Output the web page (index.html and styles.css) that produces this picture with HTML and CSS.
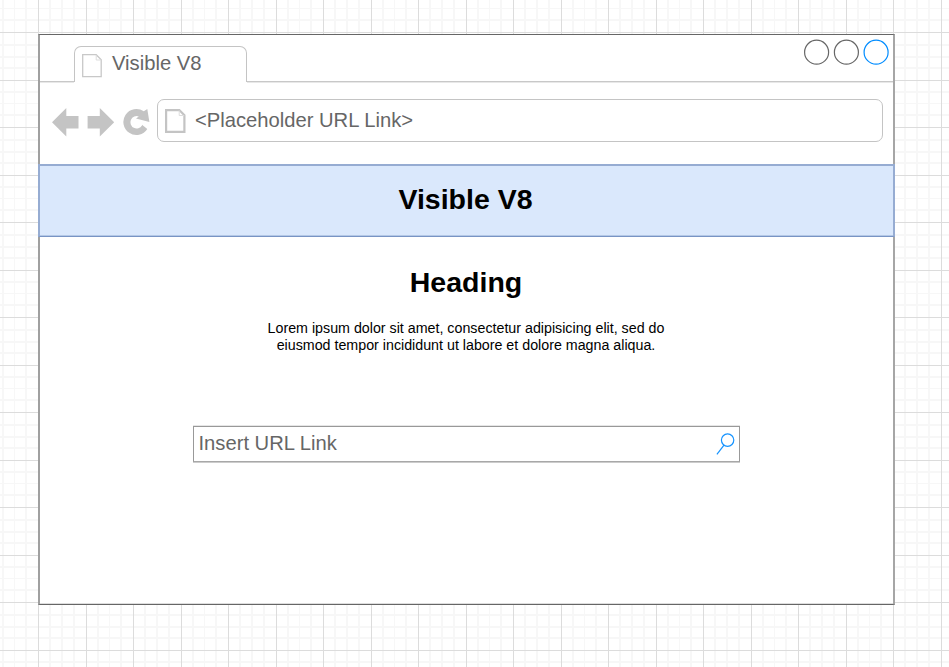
FILE: index.html
```html
<!DOCTYPE html>
<html lang="en">
<head>
<meta charset="utf-8">
<title>Visible V8</title>
<link rel="stylesheet" href="styles.css">
</head>
<body>
<svg class="grid" aria-hidden="true">
  <defs>
    <pattern id="cells" x="38" y="32" width="95" height="95" patternUnits="userSpaceOnUse">
      <path fill="#f7f7f7" d="M11 0h2v95h-2zM23 0h2v95h-2zM35 0h2v95h-2zM59 0h2v95h-2zM71 0h1v95h-1zM82 0h2v95h-2zM0 12h95v2H0zM0 24h95v2H0zM0 35h95v2H0zM0 59h95v2H0zM0 71h95v1H0zM0 82h95v2H0z"/>
      <path fill="#dcdcdc" d="M0 0h1v95H0zM48 0h1v95h-1zM0 0h95v1H0zM0 48h95v1H0z"/>
    </pattern>
  </defs>
  <rect width="100%" height="100%" fill="url(#cells)"/>
</svg>
<main class="window">
  <header class="tabs">
    <div class="lead"></div>
    <div class="tab">
      <svg class="page-icon" width="20" height="24" viewBox="0 0 20 24"><path class="outline" d="M.7.7h13.5l5 5v17H.7z"/><path class="fold" d="M14.2 1v5h5"/></svg>
      <span>Visible V8</span>
    </div>
    <div class="rest">
      <svg width="86" height="28" viewBox="0 0 86 28" fill="none" stroke="#666" stroke-width="1.2"><circle cx="13.6" cy="14.2" r="12"/><circle cx="43.4" cy="14.2" r="12"/><circle cx="73.1" cy="14.2" r="12" stroke="#008cff"/></svg>
    </div>
  </header>
  <nav class="toolbar">
    <svg class="nav-icons" width="98" height="30" viewBox="0 0 98 30" fill="#c4c4c4"><path d="M0 15.3 14.3 1v8H26.5v12.6H14.3v8zM35.6 9H47.8V1l14.4 14.3-14.4 14.3v-8H35.6z"/><path d="M90 17.7 95.3 22A13 13 0 1 1 91.8 4.3L95.3 2 97.4 15 84 11.5 86.8 9.5A6.2 6.2 0 1 0 90 18.5z"/></svg>
    <div class="address">
      <svg class="page-icon" width="21" height="24" viewBox="0 0 21 24"><path class="outline thick" d="M1.1 1.1h13.2l5.1 5.2v16.5H1.1z"/><path class="fold" d="M14.2 1.5v5h5"/></svg>
      <span>&lt;Placeholder URL Link&gt;</span>
    </div>
  </nav>
  <section class="banner"><h1>Visible V8</h1></section>
  <section class="content">
    <h2>Heading</h2>
    <p>Lorem ipsum dolor sit amet, consectetur adipisicing elit, sed do<br>eiusmod tempor incididunt ut labore et dolore magna aliqua.</p>
    <div class="search">
      <span>Insert URL Link</span>
      <svg width="20" height="24" viewBox="0 0 20 24" fill="none" stroke="#1593ff" stroke-width="1.2"><circle cx="11.6" cy="8.1" r="6.2"/><path d="M8 13.2.9 22.3"/></svg>
    </div>
  </section>
</main>
</body>
</html>
```

FILE: styles.css
```css
* { box-sizing: border-box; }
body {
  margin: 0;
  height: 667px;
  overflow: hidden;
  padding: 34px 0 0 38px;
  background: #fff;
  font-family: "Liberation Sans", Arial, sans-serif;
}
svg { display: block; flex: none; }
.grid { position: absolute; inset: 0; width: 100%; height: 100%; z-index: -1; }
.window {
  width: 857px;
  height: 571px;
  background: #fff;
  border: 1px solid #666;
  border-left: 2px solid #a0a0a0;
  border-right: 2px solid #a6a6a6;
  box-shadow: inset 0 -1px #ddd;
  display: flex;
  flex-direction: column;
}
.tabs { height: 47px; display: flex; flex: none; }
.lead { width: 34px; border-bottom: 1px solid #c8c8c8; box-shadow: 0 1px #e8e8e8; }
.tab {
  width: 173px;
  height: 36px;
  margin-top: 11px;
  border: 1px solid #c4c4c4;
  border-bottom: 0;
  border-radius: 7px 7px 0 0;
  display: flex;
  padding-left: 7px;
  color: #666;
  font-size: 20.2px;
  line-height: 23px;
}
.tab .page-icon { margin-top: 7px; }
.tab span { margin: 5px 0 0 10px; }
.outline { fill: none; stroke: #c8c8c8; stroke-width: 1.3; }
.thick { stroke: #c4c4c4; stroke-width: 2.2; }
.fold { fill: none; stroke: #ddd; stroke-width: 1; }
.rest {
  flex: 1;
  border-bottom: 1px solid #c8c8c8;
  box-shadow: 0 1px #e8e8e8;
  display: flex;
  justify-content: flex-end;
  padding: 3px 4px 0 0;
}
.toolbar { height: 82px; flex: none; display: flex; padding: 17px 0 0 12px; }
.nav-icons { margin-top: 8px; }
.address {
  width: 726px;
  height: 43px;
  margin-left: 7px;
  border: 1px solid #c4c4c4;
  border-radius: 7px;
  display: flex;
  padding-left: 7px;
  color: #666;
  font-size: 20.2px;
  line-height: 23px;
}
.address .page-icon { margin-top: 9px; }
.address span { margin: 9px 0 0 9px; }
.banner {
  height: 73px;
  flex: none;
  margin: 0 -2px;
  border: 2px solid #96acd2;
  border-bottom: 1px solid #7894c4;
  box-shadow: inset 0 -1px #b4c8e6;
  background: #dae8fc;
  text-align: center;
}
h1, h2 { margin: 0; font-size: 28.5px; line-height: 34px; font-weight: bold; text-align: center; }
h1 { margin: 16px 2px 0 0; }
.content { display: flex; flex-direction: column; align-items: center; padding-right: 1px; }
h2 { margin-top: 28px; }
p { margin: 21px 0 0; font-size: 14.25px; line-height: 17px; text-align: center; color: #000; }
.search {
  width: 547px;
  height: 36px;
  margin-top: 72px;
  border: 1px solid #999;
  border-bottom-color: #a8a8a8;
  box-shadow: 0 1px #ccc, 0 -1px #e6e6e6;
  display: flex;
  justify-content: space-between;
  padding: 5px 3px 0 5px;
  color: #666;
  font-size: 20.2px;
  line-height: 23px;
}
```
